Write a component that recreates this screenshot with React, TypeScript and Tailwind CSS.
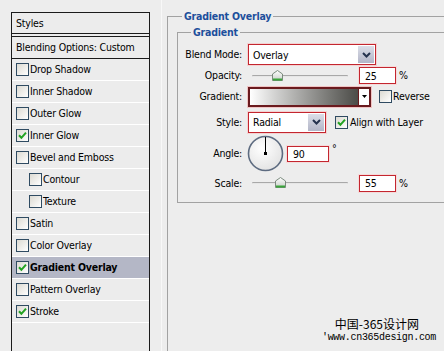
import React from "react";

type StyleItem = {
  name: string;
  checked?: boolean;
  indent?: boolean;
  active?: boolean;
};

const styleItems: StyleItem[] = [
  { name: "Drop Shadow" },
  { name: "Inner Shadow" },
  { name: "Outer Glow" },
  { name: "Inner Glow", checked: true },
  { name: "Bevel and Emboss" },
  { name: "Contour", indent: true },
  { name: "Texture", indent: true },
  { name: "Satin" },
  { name: "Color Overlay" },
  { name: "Gradient Overlay", checked: true, active: true },
  { name: "Pattern Overlay" },
  { name: "Stroke", checked: true },
];

// XP style checkbox
const Check = ({ checked }: { checked?: boolean }) => (
  <span className="flex h-[13px] w-[13px] shrink-0 items-center justify-center border border-[#2f4b62] bg-linear-to-br from-[#dcdad2] to-white">
    {checked && (
      <svg width="9" height="9" viewBox="0 0 9 9">
        <path d="M1 4.2 L3.4 6.8 L8 1.6" stroke="#22a322" strokeWidth="2" fill="none" />
      </svg>
    )}
  </span>
);

const Chevron = () => (
  <span className="mr-[1px] flex h-[17px] w-[16px] items-center justify-center bg-linear-to-b from-[#dcdee8] to-[#b2b5c7]">
    <svg width="9" height="6" viewBox="0 0 9 6">
      <path d="M1 1 L4.5 4.5 L8 1" stroke="#25324e" strokeWidth="2" fill="none" />
    </svg>
  </span>
);

const Select = ({ value, width }: { value: string; width: string }) => (
  <div className={`flex h-[21px] items-center border border-[#c3262f] bg-white shadow-[0_0_0_1px_#f4d2d2] ${width}`}>
    <span className="flex-1 pl-[4px] pt-[1px]">{value}</span>
    <Chevron />
  </div>
);

const NumBox = ({ value, width, height }: { value: string; width: string; height: string }) => (
  <div className={`flex items-center border border-[#c3262f] bg-white pl-[5px] pt-[1px] shadow-[0_0_0_1px_#f6dada] ${width} ${height}`}>
    {value}
  </div>
);

const Slider = ({ pos }: { pos: number }) => (
  <div className="flex w-[111px] items-center">
    <div className="relative ml-[4px] h-[2px] w-[96px] rounded-full bg-[#a8a8a8] border-b border-[#e6e6e6]">
      <svg
        className="absolute top-[-5px]"
        style={{ left: pos }}
        width="11"
        height="11"
        viewBox="0 0 11 11"
      >
        <defs>
          <linearGradient id="thumb" x1="0" y1="0" x2="0" y2="1">
            <stop offset="0" stopColor="#ffffff" />
            <stop offset="1" stopColor="#c9cfc9" />
          </linearGradient>
        </defs>
        <path d="M0.5 4 L5.5 0.5 L10.5 4 L10.5 10.5 L0.5 10.5 Z" fill="url(#thumb)" stroke="#7b8a7e" />
        <rect x="1" y="8.5" width="9" height="2" fill="#3aa53a" />
      </svg>
    </div>
  </div>
);

const Label = ({ children }: { children: React.ReactNode }) => (
  <span className="w-[64px] shrink-0 text-right">{children}</span>
);

export default function App() {
  return (
    <div className="flex h-[351px] w-[444px] overflow-hidden bg-[#ededed] font-['DejaVu_Sans_Condensed','Liberation_Sans',sans-serif] text-[10.5px] leading-[13px] tracking-[-0.2px] text-black">
      {/* Styles list */}
      <div className="ml-[11px] mt-[12px] h-[360px] w-[139px] shrink-0 border border-[#1b1b1b] bg-[#ececec]">
        <div className="flex h-[21px] items-center border-b border-[#1b1b1b] pl-[4px]">Styles</div>
        <div className="mt-[2px] flex h-[23px] items-center border-y border-[#1b1b1b] pl-[4px]">
          Blending Options: Custom
        </div>
        {styleItems.map((item) => (
          <div
            key={item.name}
            className={`flex h-[22px] items-center gap-[1px] border-b border-white ${
              item.indent ? "pl-[17px]" : "pl-[4px]"
            } ${item.active ? "bg-[#b4b7c6] font-bold" : ""}`}
          >
            <Check checked={item.checked} />
            <span>{item.name}</span>
          </div>
        ))}
      </div>

      {/* thin highlight line beside the list */}
      <div className="ml-[11px] h-full w-px bg-[#f8f8f8]" />

      {/* Gradient Overlay options */}
      <fieldset className="ml-[5px] mt-[10px] h-[400px] min-w-0 flex-1 border-l border-t border-[#a2a2a2]">
        <legend className="ml-[14px] px-[2px] font-bold text-[#1d4f9c]">Gradient Overlay</legend>

        <fieldset className="ml-[9px] mt-[3px] min-w-0 border-y border-l border-[#a2a2a2] pb-[10px]">
          <legend className="ml-[13px] px-[2px] font-bold text-[#1d4f9c]">Gradient</legend>

          <div className="mt-[5px] flex h-[21px] items-center gap-[6px]">
            <Label>Blend Mode:</Label>
            <Select value="Overlay" width="w-[128px]" />
          </div>

          <div className="flex h-[21px] items-center gap-[6px]">
            <Label>Opacity:</Label>
            <div className="flex items-center">
              <Slider pos={20} />
              <NumBox value="25" width="w-[37px]" height="h-[17px]" />
              <span className="ml-[3px]">%</span>
            </div>
          </div>

          <div className="flex h-[21px] items-center gap-[6px]">
            <Label>Gradient:</Label>
            <div className="flex h-[20px] w-[123px] border-2 border-[#6a1a1e] shadow-[0_0_0_1px_#f0c4c4]">
              <div className="flex-1 bg-linear-to-r from-white to-[#4c4c48]" />
              <div className="flex w-[11px] items-center justify-center border-l border-[#6a1a1e] bg-white">
                <svg width="5" height="3" viewBox="0 0 5 3">
                  <path d="M0 0 L5 0 L2.5 3 Z" fill="#000" />
                </svg>
              </div>
            </div>
            <div className="ml-[2px] flex items-center gap-[1px]">
              <Check />
              <span>Reverse</span>
            </div>
          </div>

          <div className="mt-[4px] flex h-[22px] items-center gap-[6px]">
            <Label>Style:</Label>
            <Select value="Radial" width="w-[78px]" />
            <div className="ml-[3px] flex items-center gap-[2px]">
              <Check checked />
              <span>Align with Layer</span>
            </div>
          </div>

          <div className="mt-[2px] flex h-[37px] items-center">
            <Label>Angle:</Label>
            <svg className="ml-[5px]" width="37" height="37" viewBox="0 0 37 37">
              <defs>
                <radialGradient id="dial" cx="0.4" cy="0.35" r="0.7">
                  <stop offset="0" stopColor="#ffffff" />
                  <stop offset="1" stopColor="#e2e2e2" />
                </radialGradient>
              </defs>
              <circle cx="18.5" cy="18.5" r="17" fill="url(#dial)" stroke="#5d6b80" strokeWidth="1.6" />
              <line x1="18.5" y1="18.5" x2="18.5" y2="2" stroke="#000" strokeWidth="1" />
              <rect x="17" y="17" width="3" height="3" fill="#000" />
            </svg>
            <div className="ml-[3px]">
              <NumBox value="90" width="w-[42px]" height="h-[16px]" />
            </div>
            <span className="mb-[10px] ml-[3px]">°</span>
          </div>

          <div className="mt-[2px] flex h-[18px] items-center gap-[6px]">
            <Label>Scale:</Label>
            <div className="flex items-center">
              <Slider pos={23} />
              <NumBox value="55" width="w-[37px]" height="h-[17px]" />
              <span className="ml-[3px]">%</span>
            </div>
          </div>
        </fieldset>

        {/* watermark */}
        <div className="mt-[114px] flex flex-col items-end tracking-normal">
          <span className="mr-[25px] font-['Noto_Sans_CJK_SC',sans-serif] text-[12px] leading-[14px]">
            中国-365设计网
          </span>
          <span className="mr-[8px] mt-[1px] font-['Liberation_Mono',monospace] text-[10px] leading-[11px] tracking-[-0.3px]">
            'www.cn365design.com
          </span>
        </div>
      </fieldset>
    </div>
  );
}
